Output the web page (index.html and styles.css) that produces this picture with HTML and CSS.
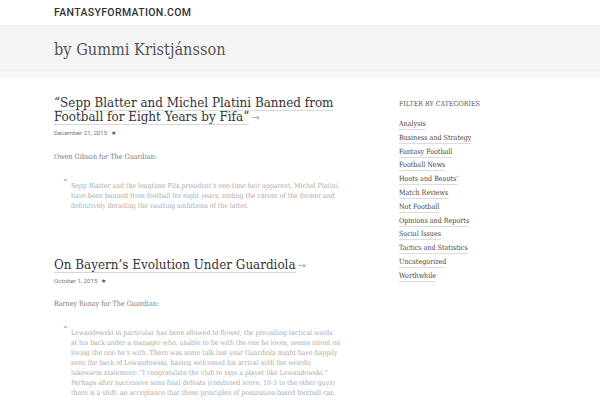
FILE: index.html
```html
<!DOCTYPE html>
<html>
<head>
<meta charset="utf-8">
<link rel="stylesheet" href="styles.css">
</head>
<body>
<header class="topbar"><a class="brand" href="#">FANTASYFORMATION.COM</a></header>
<div class="band"><h1 class="band-title">by Gummi Kristjánsson</h1></div>
<div class="wrap">
  <main class="main">
    <article class="post">
      <h2 class="post-title"><a href="#">“Sepp Blatter and Michel Platini Banned from Football for Eight Years by Fifa”</a><span class="arrow">→</span></h2>
      <div class="meta">December 21, 2015 <span class="star">★</span></div>
      <p class="lead">Owen Gibson for The Guardian:</p>
      <blockquote class="quote"><span class="qmark">“</span>Sepp Blatter and the longtime Fifa president’s one-time heir apparent, Michel Platini,<br>have been banned from football for eight years, ending the career of the former and<br>definitively derailing the vaulting ambitions of the latter.</blockquote>
    </article>
    <article class="post">
      <h2 class="post-title"><a href="#">On Bayern’s Evolution Under Guardiola</a><span class="arrow">→</span></h2>
      <div class="meta">October 1, 2015 <span class="star">★</span></div>
      <p class="lead">Barney Ronay for The Guardian:</p>
      <blockquote class="quote"><span class="qmark">“</span>Lewandowski in particular has been allowed to flower, the prevailing tactical winds<br>at his back under a manager who, unable to be with the one he loves, seems intent on<br>loving the one he’s with. There was some talk last year Guardiola might have happily<br>seen the back of Lewandowski, having welcomed his arrival with the weirdly<br>lukewarm statement: “I congratulate the club to sign a player like Lewandowski.”<br>Perhaps after successive semi-final defeats (combined score: 10-3 to the other guys)<br>there is a shift, an acceptance that those principles of possession-based football can<br>be adapted.</blockquote>
    </article>
  </main>
  <aside class="sidebar">
    <h3 class="side-title">Filter by Categories</h3>
    <ul class="cats">
      <li><a href="#">Analysis</a></li>
      <li><a href="#">Business and Strategy</a></li>
      <li><a href="#">Fantasy Football</a></li>
      <li><a href="#">Football News</a></li>
      <li><a href="#">Hoots and Beauts’</a></li>
      <li><a href="#">Match Reviews</a></li>
      <li><a href="#">Not Football</a></li>
      <li><a href="#">Opinions and Reports</a></li>
      <li><a href="#">Social Issues</a></li>
      <li><a href="#">Tactics and Statistics</a></li>
      <li><a href="#">Uncategorized</a></li>
      <li><a href="#">Worthwhile</a></li>
    </ul>
  </aside>
</div>
</body>
</html>
```
FILE: styles.css
```css
html, body { margin: 0; padding: 0; background: #fff; }
body { font-family: "DejaVu Serif", serif; font-stretch: condensed; color: #555; overflow: hidden; }
a { color: inherit; text-decoration: none; }

.topbar { height: 25px; padding-left: 54px; display: flex; align-items: center; }
.brand { font-family: Roboto, "Liberation Sans", sans-serif; font-stretch: normal; font-weight: 500; font-size: 10.5px; letter-spacing: 0.35px; color: #333; }

.band { background: #f4f4f4; height: 46px; border-bottom: 7px solid #f7f7f7; box-shadow: inset 0 -1px 0 #ededed; padding-left: 54px; display: flex; align-items: center; }
.band-title { margin: 2px 0 0; font-family: "DejaVu Serif", serif; font-weight: 300; font-size: 16.2px; color: #555; }

.wrap { display: flex; padding-left: 54px; padding-top: 18px; }
.main { width: 292px; flex: none; }
.sidebar { margin-left: 53px; width: 180px; padding-top: 3.5px; }

.post { margin-bottom: 47px; }
.post-title { margin: 0; font-family: "DejaVu Serif", serif; font-weight: normal; font-size: 13.3px; line-height: 14px; color: #333; }
.post-title a { border-bottom: 1px solid #d8d8d8; }
.arrow { color: #aaa; font-family: "DejaVu Sans", sans-serif; font-stretch: normal; font-size: 10px; margin-left: 2px; }

.meta { font-family: Roboto, "Liberation Sans", sans-serif; font-stretch: normal; font-size: 6.2px; color: #777; margin-top: 4px; }
.star { font-size: 6px; margin-left: 2px; color: #555; }

.lead { font-size: 7.1px; color: #777; margin: 14.6px 0 0; }

.quote { position: relative; margin: 20px 0 0 17px; font-size: 6.9px; letter-spacing: -0.02px; line-height: 10px; color: #aaa; white-space: nowrap; }
.qmark { position: absolute; left: -8px; top: -3px; font-size: 10px; color: #999; }

.side-title { margin: 0 0 9.5px; font-weight: normal; font-size: 7px; text-transform: uppercase; color: #555; }
.cats { list-style: none; margin: 0; padding: 0; }
.cats li { font-size: 7.1px; line-height: 13.8px; color: #444; }
.cats a { border-bottom: 1px solid #ddd; padding-bottom: 1px; }
```
